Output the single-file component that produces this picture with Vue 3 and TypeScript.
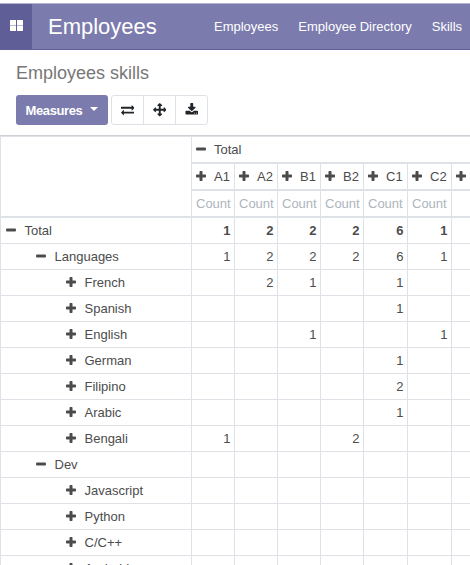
<script setup lang="ts">
interface Row {
  label: string
  level: number
  open: boolean
  values: string[]
  bold?: boolean
}

const menus: string[] = ['Employees', 'Employee Directory', 'Skills']
const levels: string[] = ['A1', 'A2', 'B1', 'B2', 'C1', 'C2', '']

const rows: Row[] = [
  { label: 'Total', level: 0, open: true, values: ['1', '2', '2', '2', '6', '1', ''], bold: true },
  { label: 'Languages', level: 1, open: true, values: ['1', '2', '2', '2', '6', '1', ''] },
  { label: 'French', level: 2, open: false, values: ['', '2', '1', '', '1', '', ''] },
  { label: 'Spanish', level: 2, open: false, values: ['', '', '', '', '1', '', ''] },
  { label: 'English', level: 2, open: false, values: ['', '', '1', '', '', '1', ''] },
  { label: 'German', level: 2, open: false, values: ['', '', '', '', '1', '', ''] },
  { label: 'Filipino', level: 2, open: false, values: ['', '', '', '', '2', '', ''] },
  { label: 'Arabic', level: 2, open: false, values: ['', '', '', '', '1', '', ''] },
  { label: 'Bengali', level: 2, open: false, values: ['1', '', '', '2', '', '', ''] },
  { label: 'Dev', level: 1, open: true, values: ['', '', '', '', '', '', ''] },
  { label: 'Javascript', level: 2, open: false, values: ['', '', '', '', '', '', ''] },
  { label: 'Python', level: 2, open: false, values: ['', '', '', '', '', '', ''] },
  { label: 'C/C++', level: 2, open: false, values: ['', '', '', '', '', '', ''] },
  { label: 'Android', level: 2, open: false, values: ['', '', '', '', '', '', ''] },
]

const minusPath = 'M1 3.5h8q1 0 1 1v1q0 1-1 1h-8q-1 0-1-1v-1q0-1 1-1z'
const plusPath =
  'M4.2 0h1.6q.7 0 .7.7v2.8h2.8q.7 0 .7.7v1.6q0 .7-.7.7h-2.8v2.8q0 .7-.7.7h-1.6q-.7 0-.7-.7v-2.8h-2.8q-.7 0-.7-.7v-1.6q0-.7.7-.7h2.8v-2.8q0-.7.7-.7z'

const tools = [
  {
    name: 'Flip axis',
    path: 'M1792 1184v192q0 13-9.5 22.5t-22.5 9.5h-1376v192q0 13-9.5 22.5t-22.5 9.5q-12 0-24-10l-319-320q-9-9-9-22 0-14 9-23l320-320q9-9 23-9 13 0 22.5 9.5t9.5 22.5v192h1376q13 0 22.5 9.5t9.5 22.5zm0-544q0 14-9 23l-320 320q-9 9-23 9-13 0-22.5-9.5t-9.5-22.5v-192h-1376q-13 0-22.5-9.5t-9.5-22.5v-192q0-13 9.5-22.5t22.5-9.5h1376v-192q0-14 9-23t23-9q12 0 24 10l319 319q9 9 9 23z',
  },
  {
    name: 'Expand all',
    path: 'M1792 896q0 26-19 45l-256 256q-19 19-45 19t-45-19-19-45v-128h-384v384h128q26 0 45 19t19 45-19 45l-256 256q-19 19-45 19t-45-19l-256-256q-19-19-19-45t19-45 45-19h128v-384h-384v128q0 26-19 45t-45 19-45-19l-256-256q-19-19-19-45t19-45l256-256q19-19 45-19t45 19 19 45v128h384v-384h-128q-26 0-45-19t-19-45 19-45l256-256q19-19 45-19t45 19l256 256q19 19 19 45t-19 45-45 19h-128v384h384v-128q0-26 19-45t45-19 45 19l256 256q19 19 19 45z',
  },
  {
    name: 'Download',
    path: 'M1344 1344q0-26-19-45t-45-19-45 19-19 45 19 45 45 19 45-19 19-45zm256 0q0-26-19-45t-45-19-45 19-19 45 19 45 45 19 45-19 19-45zm128-224v320q0 40-28 68t-68 28h-1472q-40 0-68-28t-28-68v-320q0-40 28-68t68-28h465l135 136q58 56 136 56t136-56l136-136h464q40 0 68 28t28 68zm-325-569q17 41-14 70l-448 448q-18 19-45 19t-45-19l-448-448q-31-29-14-70 17-39 59-39h256v-448q0-26 19-45t45-19h256q26 0 45 19t19 45v448h256q42 0 59 39z',
  },
]
</script>

<template>
  <div class="app">
    <header class="navbar">
      <div class="apps">
        <svg width="13" height="11" viewBox="0 0 13 11">
          <path d="M.5 0H6v5H0V.5zM7 0h5.5l.5.5V5H7zM0 6h6v5H.5l-.5-.5zM7 6h6v4.5l-.5.5H7z" fill="#fff" />
          <path d="M0 5h6v1H0zM7 5h6v1H7z" fill="#b9b9d3" />
        </svg>
      </div>
      <div class="brand">Employees</div>
      <nav class="menus">
        <a v-for="m in menus" :key="m">{{ m }}</a>
      </nav>
    </header>

    <section class="panel">
      <div class="title">Employees skills</div>
      <div class="buttons">
        <button class="measures">Measures<span class="caret"></span></button>
        <div class="group">
          <button v-for="t in tools" :key="t.name" class="tool">
            <svg width="13.5" height="13.5" viewBox="0 0 1792 1792"><path :d="t.path" fill="#212529" /></svg>
          </button>
        </div>
      </div>
    </section>

    <div class="pivot">
      <div class="corner"></div>
      <div class="head top">
        <svg class="sign" viewBox="0 0 10 10"><path :d="minusPath" /></svg>Total
      </div>
      <div v-for="(l, i) in levels" :key="'l' + i" class="head">
        <svg class="sign" viewBox="0 0 10 10"><path :d="plusPath" /></svg>{{ l }}
      </div>
      <div v-for="(l, i) in levels" :key="'c' + i" class="head count">{{ l ? 'Count' : '' }}</div>
      <template v-for="r in rows" :key="r.label">
        <div class="cell name" :class="'level' + r.level">
          <svg class="sign" viewBox="0 0 10 10"><path :d="r.open ? minusPath : plusPath" /></svg>{{ r.label }}
        </div>
        <div v-for="(v, i) in r.values" :key="i" class="cell value" :class="{ bold: r.bold }">{{ v }}</div>
      </template>
    </div>
  </div>
</template>

<style>
body {
  margin: 0;
  background: #fff;
  overflow: hidden;
}
</style>

<style scoped>
.app {
  box-sizing: border-box;
  width: 470px;
  height: 565px;
  padding-top: 3px;
  overflow: hidden;
  background: #fff;
  font: 13px/19px 'Liberation Sans', Arial, sans-serif;
  color: #4c4c4c;
}
.navbar {
  box-sizing: border-box;
  display: flex;
  height: 47px;
  background: #7c7bad;
  border-top: 1px solid #b2b3cd;
  border-bottom: 1px solid #5f5e97;
  color: #fff;
  white-space: nowrap;
}
.apps {
  width: 32px;
  display: flex;
  align-items: flex-start;
  padding: 16px 0 0 10px;
  box-sizing: border-box;
  background: #5f5e97;
}
.brand {
  width: 166px;
  padding-left: 16px;
  box-sizing: border-box;
  font-size: 22px;
  line-height: 45px;
}
.menus {
  display: flex;
  gap: 20px;
  padding-left: 16px;
  line-height: 46px;
}
.panel {
  box-sizing: border-box;
  height: 86px;
  padding: 13px 16px 0;
  border-bottom: 1px solid #cfcfd6;
}
.title {
  font-size: 18px;
  line-height: 20px;
  color: #777;
}
.buttons {
  display: flex;
  gap: 3px;
  margin-top: 12px;
}
button {
  box-sizing: border-box;
  display: flex;
  align-items: center;
  justify-content: center;
  margin: 0;
  padding: 0;
  font: inherit;
}
.measures {
  width: 92px;
  height: 30px;
  gap: 8px;
  border: 0;
  border-radius: 3px;
  background: #7c7bad;
  color: #fff;
  font-weight: bold;
  letter-spacing: -0.4px;
}
.caret {
  border: 4px solid transparent;
  border-top-color: #fff;
  border-bottom: 0;
  margin-bottom: 3px;
}
.group {
  box-sizing: border-box;
  display: flex;
  width: 97px;
  height: 30px;
  border: 1px solid #dee2e6;
  border-radius: 3px;
}
.tool {
  flex: 1;
  border: 0;
  border-right: 1px solid #dee2e6;
  background: transparent;
}
.tool:last-child {
  border-right: 0;
}
.pivot {
  display: grid;
  grid-template-columns: 191px repeat(4, 43px) 44px 44px 43px;
  grid-template-rows: 28px 27px 27px;
  grid-auto-rows: 26px;
  width: 494px;
  white-space: nowrap;
}
.pivot > div {
  box-sizing: border-box;
  border-left: 1px solid #dee2e6;
}
.corner {
  grid-row: 1 / 4;
  border-top: 1px solid #dee2e6;
  border-bottom: 2px solid #dee2e6;
}
.head {
  display: flex;
  align-items: center;
  padding-left: 4px;
  border-bottom: 2px solid #dee2e6;
}
.top {
  grid-column: 2 / -1;
  border-top: 1px solid #dee2e6;
}
.count {
  color: #adb5bd;
}
.cell {
  border-bottom: 1px solid #dee2e6;
}
.name {
  display: flex;
  align-items: center;
}
.level0 {
  padding-left: 5px;
}
.level1 {
  padding-left: 35px;
}
.level2 {
  padding-left: 65px;
}
.value {
  padding: 3px 3.5px 0 0;
  text-align: right;
}
.bold {
  font-weight: bold;
}
.sign {
  flex: none;
  width: 10px;
  height: 10px;
  margin: 0 8px 1px 0;
  fill: #4c4c4c;
}
.name .sign {
  margin-right: 8.5px;
}
</style>
